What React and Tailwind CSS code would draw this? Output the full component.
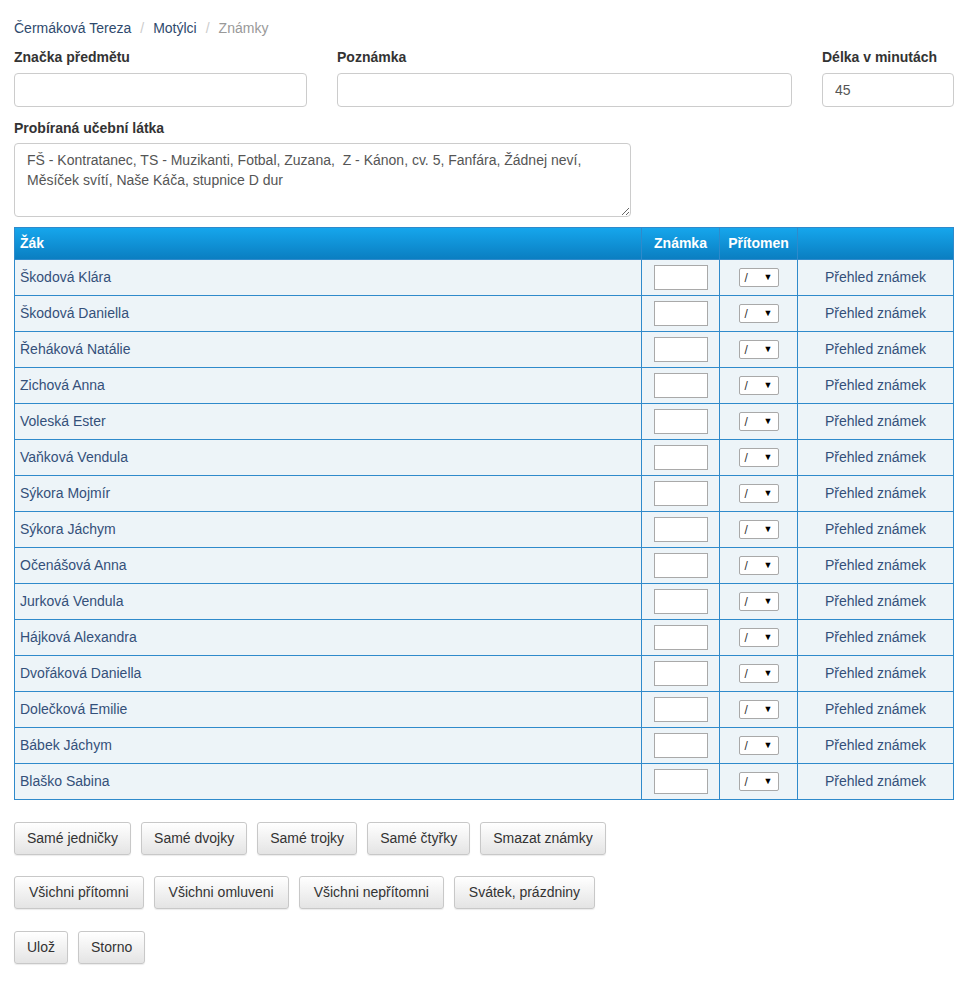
import React from "react";

const students = [
  "Škodová Klára",
  "Škodová Daniella",
  "Řeháková Natálie",
  "Zichová Anna",
  "Voleská Ester",
  "Vaňková Vendula",
  "Sýkora Mojmír",
  "Sýkora Jáchym",
  "Očenášová Anna",
  "Jurková Vendula",
  "Hájková Alexandra",
  "Dvořáková Daniella",
  "Dolečková Emilie",
  "Bábek Jáchym",
  "Blaško Sabina",
];

const Btn = ({ children, wide }) => (
  <button className={`h-[33px] ${wide ? "px-[14px]" : "px-3"} rounded-[3px] border border-[#c8c8c8] bg-gradient-to-b from-white to-[#e4e4e4] text-[14px] text-[#333] shadow-[0_1px_1px_rgba(0,0,0,0.08)]`}>
    {children}
  </button>
);

const App = () => {
  return (
    <div className="min-h-screen bg-white text-[14px] text-[#333] px-[14px] pt-[18px]" style={{ fontFamily: '"Liberation Sans", Arial, sans-serif' }}>
      {/* breadcrumb */}
      <div className="flex items-center h-[20px] text-[#2f4a6d]">
        <span>Čermáková Tereza</span>
        <span className="px-[9px] text-[#ccc]">/</span>
        <span>Motýlci</span>
        <span className="px-[9px] text-[#ccc]">/</span>
        <span className="text-[#999]">Známky</span>
      </div>

      {/* top inputs */}
      <div className="flex mt-[9px]">
        <div className="w-[293px]">
          <div className="font-bold h-[20px] leading-[20px]">Značka předmětu</div>
          <input className="mt-[6px] w-full h-[34px] border border-[#ccc] rounded-[4px] px-3" />
        </div>
        <div className="w-[455px] ml-[30px]">
          <div className="font-bold h-[20px] leading-[20px]">Poznámka</div>
          <input className="mt-[6px] w-full h-[34px] border border-[#ccc] rounded-[4px] px-3" />
        </div>
        <div className="w-[132px] ml-[30px]">
          <div className="font-bold h-[20px] leading-[20px]">Délka v minutách</div>
          <input defaultValue="45" className="mt-[6px] w-full h-[34px] border border-[#ccc] rounded-[4px] px-3 text-[#555]" />
        </div>
      </div>

      <div className="mt-[11px] font-bold h-[20px] leading-[20px]">Probíraná učební látka</div>
      <textarea
        className="mt-[5px] block w-[617px] h-[74px] border border-[#ccc] rounded-[4px] px-3 py-[6px] leading-[20px] text-[#555]"
        defaultValue="FŠ - Kontratanec, TS - Muzikanti, Fotbal, Zuzana,  Z - Kánon, cv. 5, Fanfára, Žádnej neví, Měsíček svítí, Naše Káča, stupnice D dur"
      />

      {/* table */}
      <table className="mt-[10px] w-[940px] border-collapse border border-[#2f8acb]">
        <thead>
          <tr className="h-[32px] bg-gradient-to-b from-[#16a6ec] to-[#0a7dc0] text-white">
            <th className="text-left px-[5px] border border-[#2f8acb] w-[627px] font-bold">Žák</th>
            <th className="border border-[#2f8acb] w-[78px] font-bold">Známka</th>
            <th className="border border-[#2f8acb] w-[78px] font-bold">Přítomen</th>
            <th className="border border-[#2f8acb] w-[156px]"></th>
          </tr>
        </thead>
        <tbody>
          {students.map((s, i) => (
            <tr key={i} className="h-[36px] bg-[#edf4f8]">
              <td className="px-[5px] border border-[#2f8acb] text-[#34507a]">{s}</td>
              <td className="border border-[#2f8acb]">
                <div className="flex justify-center">
                  <input className="w-[54px] h-[25px] border border-[#a9a9a9] bg-white" />
                </div>
              </td>
              <td className="border border-[#2f8acb]">
                <div className="flex justify-center">
                  <div className="w-[40px] h-[19px] border border-[#a9a9a9] rounded-[2px] bg-white flex items-center justify-between pl-[5px] pr-[5px] text-[12px]">
                    <span className="text-[#333]">/</span>
                    <span className="text-[9px] text-black">▼</span>
                  </div>
                </div>
              </td>
              <td className="border border-[#2f8acb] text-center text-[#34507a]">Přehled známek</td>
            </tr>
          ))}
        </tbody>
      </table>

      <div className="flex gap-[10px] mt-[22px]">
        <Btn>Samé jedničky</Btn>
        <Btn>Samé dvojky</Btn>
        <Btn>Samé trojky</Btn>
        <Btn>Samé čtyřky</Btn>
        <Btn>Smazat známky</Btn>
      </div>
      <div className="flex gap-[10px] mt-[21px]">
        <Btn wide>Všichni přítomni</Btn>
        <Btn wide>Všichni omluveni</Btn>
        <Btn wide>Všichni nepřítomni</Btn>
        <Btn wide>Svátek, prázdniny</Btn>
      </div>
      <div className="flex gap-[10px] mt-[22px] pb-[22px]">
        <Btn>Ulož</Btn>
        <Btn>Storno</Btn>
      </div>
    </div>
  );
};

export default App;
